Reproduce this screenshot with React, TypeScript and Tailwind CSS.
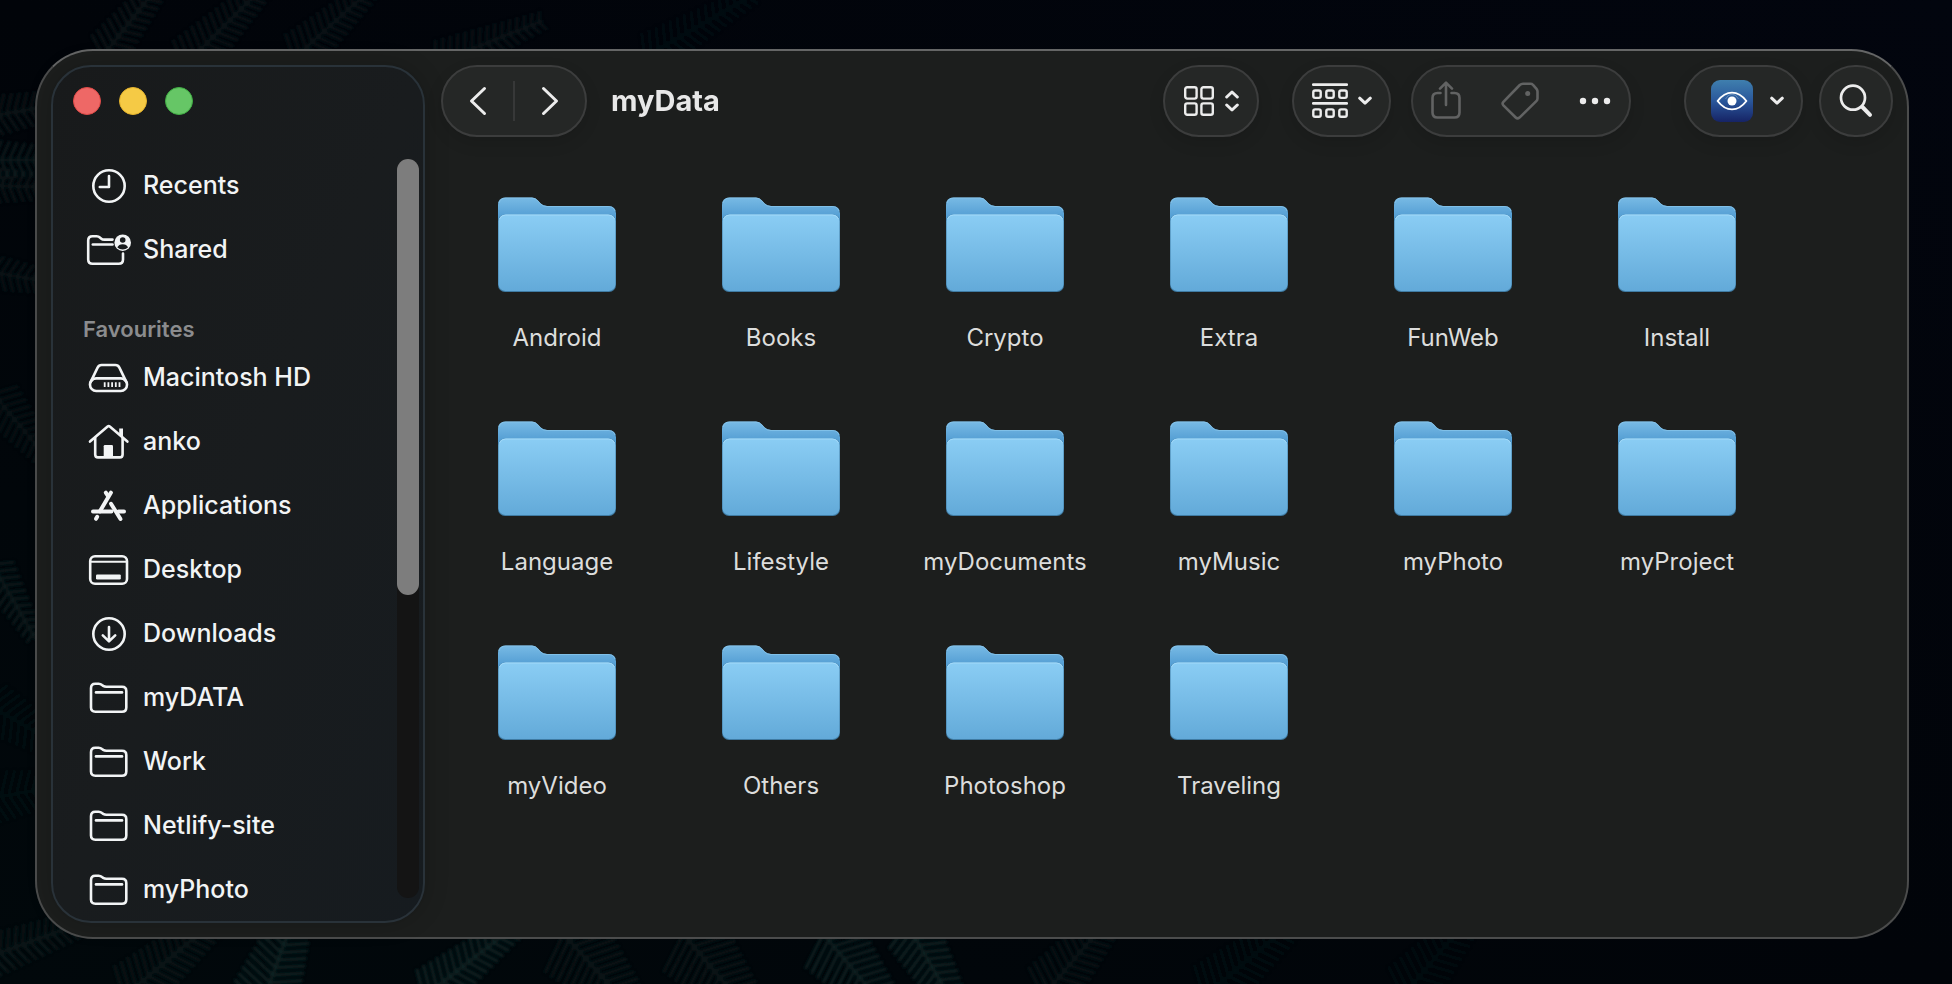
import type { ReactNode } from "react";

const ICON_FOLDER = (
  <>
    <path d="M7 10.3Q7 5.8 11.3 5.8H14.6Q16.6 5.8 18 7L19.2 7.9Q20.5 8.8 22.4 8.8H38Q42.3 8.8 42.3 13V29.5Q42.3 33.7 38 33.7H11.3Q7 33.7 7 29.5Z" />
    <path d="M12 14.4H38" />
  </>
);

const ICONS: Record<string, ReactNode> = {
  clock: (
    <>
      <circle cx="25" cy="20" r="15.7" />
      <path d="M25 10V21H15.8" />
    </>
  ),
  shared: (
    <>
      <path d="M28.5 9.6H20.4Q18.4 9.6 17 8.4L16.2 7.7Q14.6 6.2 12.6 6.2H8.5Q4.2 6.2 4.2 10.5V29.5Q4.2 33.8 8.5 33.8H34.7Q39 33.8 39 29.5V23.5" />
      <path d="M8.8 14.5H28.5" />
      <circle cx="38.7" cy="12.7" r="8.3" fill="currentColor" stroke="none" />
      <circle cx="38.7" cy="10" r="2.8" fill="#181b1d" stroke="none" />
      <path d="M33.4 17.6Q34.6 14.2 38.7 14.2T44 17.6Q41.8 19.6 38.7 19.6T33.4 17.6Z" fill="#181b1d" stroke="none" />
    </>
  ),
  disk: (
    <>
      <rect x="6" y="20.4" width="37" height="12.6" rx="6.2" />
      <path d="M6.8 23.6L13.6 9.6Q14.9 7 17.6 7H31.4Q34.1 7 35.4 9.6L42.2 23.6" />
      <path d="M20.7 24.2V29M24.4 24.2V29M28.1 24.2V29M31.8 24.2V29M35.5 24.2V29" strokeWidth="1.8" strokeLinecap="butt" />
    </>
  ),
  home: (
    <>
      <path d="M6 19.6L23.6 4.6Q24.7 3.7 25.8 4.6L43.4 19.6" />
      <path d="M11.2 16V32.5Q11.2 35.4 14 35.4H35.8Q38.6 35.4 38.6 32.5V16" />
      <path d="M19.7 36V24.2Q19.7 23 21 23H27.8Q29 23 29 24.2V36Z" fill="currentColor" stroke="none" />
      <path d="M35.2 6.4H39V15.6L35.2 12.4Z" fill="currentColor" stroke="none" />
    </>
  ),
  apps: (
    <g strokeWidth="4">
      <path d="M27 6.6L15.8 25.4" />
      <path d="M21.8 6.6L24 10" />
      <path d="M27 17.8L36.5 33" />
      <path d="M9 25.4H27.4M34.5 25.4H40" />
      <path d="M13.2 30.8L12 32.8" />
    </g>
  ),
  desktop: (
    <>
      <rect x="6.2" y="6.2" width="36.8" height="27.6" rx="4.8" />
      <path d="M7 11.8H42" strokeWidth="2" />
      <rect x="12" y="24.4" width="24.8" height="5" rx="1.2" fill="currentColor" stroke="none" />
    </>
  ),
  download: (
    <>
      <circle cx="25" cy="20" r="15.7" />
      <path d="M25 13V27M18.8 21.4L25 27.4L31.2 21.4" />
    </>
  ),
  folder: ICON_FOLDER,
};

const topLinks = [
  { icon: "clock", label: "Recents" },
  { icon: "shared", label: "Shared" },
];

const favourites = [
  { icon: "disk", label: "Macintosh HD" },
  { icon: "home", label: "anko" },
  { icon: "apps", label: "Applications" },
  { icon: "desktop", label: "Desktop" },
  { icon: "download", label: "Downloads" },
  { icon: "folder", label: "myDATA" },
  { icon: "folder", label: "Work" },
  { icon: "folder", label: "Netlify-site" },
  { icon: "folder", label: "myPhoto" },
];

const folders = [
  "Android", "Books", "Crypto", "Extra", "FunWeb", "Install",
  "Language", "Lifestyle", "myDocuments", "myMusic", "myPhoto", "myProject",
  "myVideo", "Others", "Photoshop", "Traveling",
];

// x, y, heading in degrees, stem length, leaflet length, opacity
const fronds = [
  [100, 60, -52, 110, 22, 0.5],
  [180, 70, -45, 120, 26, 0.45],
  [290, 62, -42, 110, 24, 0.4],
  [430, 66, -22, 120, 22, 0.4],
  [640, 60, -30, 130, 22, 0.25],
  [-30, 120, -10, 130, 22, 0.5],
  [-20, 160, 0, 110, 20, 0.55],
  [-20, 185, 2, 110, 18, 0.5],
  [-20, 270, 10, 110, 18, 0.4],
  [-10, 390, 50, 100, 24, 0.35],
  [-10, 560, 60, 90, 20, 0.55],
  [-20, 700, 30, 120, 26, 0.3],
  [-20, 800, -10, 120, 26, 0.3],
  [-20, 960, -20, 150, 22, 0.5],
  [120, 1000, -40, 140, 30, 0.5],
  [260, 1010, -70, 120, 34, 0.9],
  [420, 1000, -38, 130, 26, 0.9],
  [560, 930, 48, 120, 40, 0.5],
  [680, 930, 50, 120, 40, 0.5],
  [820, 930, 50, 120, 36, 0.7],
  [905, 920, 60, 120, 28, 0.9],
  [1040, 1000, -50, 130, 30, 0.4],
  [1200, 1000, -40, 130, 30, 0.3],
  [1400, 1000, -50, 120, 30, 0.2],
];

function Frond({ data }: { data: number[] }) {
  const [x, y, angle, length, leaf, opacity] = data;
  let d = `M0 0H${length}`;
  for (let i = 6; i < length; i += 8) {
    const size = leaf * (1 - (i / length) * 0.6);
    d += `M${i} 2L${i + size * 0.4} ${size}M${i} -2L${i + size * 0.4} ${-size}`;
  }
  return (
    <path
      d={d}
      transform={`translate(${x} ${y}) rotate(${angle})`}
      stroke="#112626"
      strokeWidth="3"
      strokeLinecap="round"
      fill="none"
      opacity={opacity}
    />
  );
}

function Wallpaper() {
  return (
    <svg
      className="absolute inset-0 h-full w-full"
      viewBox="0 0 1952 984"
      preserveAspectRatio="xMidYMid slice"
      aria-hidden="true"
    >
      <defs>
        <linearGradient id="night" x1="0" y1="1" x2="1" y2="0">
          <stop offset="0" stopColor="#01080b" />
          <stop offset="0.5" stopColor="#010409" />
          <stop offset="1" stopColor="#02050e" />
        </linearGradient>
        <filter id="soft">
          <feGaussianBlur stdDeviation="1.6" />
        </filter>
      </defs>
      <rect width="1952" height="984" fill="url(#night)" />
      <g filter="url(#soft)">
        {fronds.map((data, i) => (
          <Frond key={i} data={data} />
        ))}
      </g>
    </svg>
  );
}

function FolderArt() {
  return (
    <svg width="118" height="96" viewBox="0 0 118 96" aria-hidden="true">
      <path
        d="M0 8Q0 0.5 7.5 0.5H34Q37.5 0.5 40 3.5L42.5 6.3Q45 9 49 9H110.5Q118 9 118 16.5V60H0Z"
        fill="url(#folderBack)"
      />
      <path
        d="M1 6Q2.5 1 7.5 1H34Q37.5 1 40 4L42.5 6.8Q45 9.5 49 9.5H110.5Q115.5 9.5 117 14"
        fill="none"
        stroke="#8cc8ec"
        strokeOpacity="0.7"
      />
      <rect y="17.5" width="118" height="77.5" rx="7" fill="#3f7ba3" />
      <rect x="0.5" y="17.5" width="117" height="76.5" rx="7" fill="url(#folderFront)" />
      <path d="M1.5 22Q3 18 7.5 18H110.5Q115 18 116.5 22" fill="none" stroke="#a3dafa" />
    </svg>
  );
}

function Chevron() {
  return (
    <svg width="14" height="10" viewBox="0 0 14 10" fill="none" stroke="currentColor" strokeWidth="3" strokeLinecap="round" strokeLinejoin="round" aria-hidden="true">
      <path d="M1.7 2.2L7 7.2L12.3 2.2" />
    </svg>
  );
}

function Pill({ className, children }: { className: string; children: ReactNode }) {
  return (
    <div
      className={`flex h-[72px] shrink-0 rounded-full border-2 border-[#3c3d3d] bg-[#252726] shadow-[0_6px_16px_rgba(0,0,0,0.12)] ${className}`}
    >
      {children}
    </div>
  );
}

function SidebarItem({ icon, label }: { icon: string; label: string }) {
  return (
    <li>
      <a href="#" className="flex h-16 items-center gap-[11px] pl-[31px] text-[25px] font-medium text-[#f2f4f5]">
        <svg
          className="shrink-0"
          width="48"
          height="40"
          viewBox="0 0 48 40"
          fill="none"
          stroke="currentColor"
          strokeWidth="2.6"
          strokeLinecap="round"
          strokeLinejoin="round"
          aria-hidden="true"
        >
          {ICONS[icon]}
        </svg>
        {label}
      </a>
    </li>
  );
}

function Sidebar() {
  return (
    <aside className="flex w-[374px] shrink-0 flex-col overflow-hidden rounded-[40px] border-2 border-[#293239] bg-linear-to-br from-[#181a1b] via-[#191c1e] to-[#161b1f] shadow-[0_0_24px_rgba(0,0,0,0.2)]">
      <div className="flex gap-[18px] px-5 pt-5">
        <button aria-label="Close" className="size-7 rounded-full border border-[#e04b48] bg-[#ee6866]" />
        <button aria-label="Minimise" className="size-7 rounded-full border border-[#e5b32c] bg-[#f5ca45]" />
        <button aria-label="Zoom" className="size-7 rounded-full border border-[#40ae44] bg-[#66c666]" />
      </div>
      <div className="mt-[39px] flex min-h-0 flex-1">
        <nav className="min-w-0 flex-1 overflow-hidden">
          <ul>
            {topLinks.map((item) => (
              <SidebarItem key={item.label} {...item} />
            ))}
          </ul>
          <h2 className="flex h-16 items-end pb-1 pl-[30px] text-[22px] leading-[26px] font-semibold text-[#8b8c8e]">
            Favourites
          </h2>
          <ul>
            {favourites.map((item) => (
              <SidebarItem key={item.label} {...item} />
            ))}
          </ul>
        </nav>
        <div className="mt-[5px] mr-1 mb-[23px] w-[22px] rounded-full bg-[#141414]">
          <div className="h-[59%] rounded-full bg-[#7d7d7d]" />
        </div>
      </div>
    </aside>
  );
}

function Toolbar() {
  return (
    <header className="flex items-center pl-4 text-[#ececec]">
      <Pill className="w-[146px]">
        <button aria-label="Back" className="flex flex-1 items-center justify-center">
          <svg width="18" height="30" viewBox="0 0 18 30" fill="none" stroke="currentColor" strokeWidth="3" strokeLinecap="round" strokeLinejoin="round">
            <path d="M15.5 2.5L2.5 15L15.5 27.5" />
          </svg>
        </button>
        <span className="h-10 w-[2px] self-center bg-[#373838]" />
        <button aria-label="Forward" className="flex flex-1 items-center justify-center">
          <svg width="18" height="30" viewBox="0 0 18 30" fill="none" stroke="currentColor" strokeWidth="3" strokeLinecap="round" strokeLinejoin="round">
            <path d="M2.5 2.5L15.5 15L2.5 27.5" />
          </svg>
        </button>
      </Pill>
      <h1 className="ml-6 flex-1 text-[29px] font-bold text-[#e8e8e8]">myData</h1>

      <Pill className="w-24">
        <button aria-label="View as icons" className="flex flex-1 items-center justify-center gap-[11px]">
          <svg width="30" height="30" viewBox="0 0 30 30" fill="none" stroke="currentColor" strokeWidth="2.4">
            <rect x="1.2" y="1.2" width="11.4" height="11.4" rx="2" />
            <rect x="17.4" y="1.2" width="11.4" height="11.4" rx="2" />
            <rect x="1.2" y="17.4" width="11.4" height="11.4" rx="2" />
            <rect x="17.4" y="17.4" width="11.4" height="11.4" rx="2" />
          </svg>
          <svg width="14" height="22" viewBox="0 0 14 22" fill="none" stroke="currentColor" strokeWidth="3" strokeLinecap="round" strokeLinejoin="round">
            <path d="M1.7 7L7 2L12.3 7M1.7 15L7 20L12.3 15" />
          </svg>
        </button>
      </Pill>

      <Pill className="ml-[33px] w-[99px]">
        <button aria-label="Group items" className="flex flex-1 items-center justify-center gap-[10px]">
          <svg width="36" height="36" viewBox="0 0 36 36" fill="none" stroke="currentColor" strokeWidth="2.4">
            <path d="M1.2 1.6H34.8M1.2 20.4H34.8" strokeLinecap="round" strokeWidth="2.6" />
            <rect x="1.3" y="7.5" width="7.4" height="7.4" rx="1.8" />
            <rect x="14.3" y="7.5" width="7.4" height="7.4" rx="1.8" />
            <rect x="27.3" y="7.5" width="7.4" height="7.4" rx="1.8" />
            <rect x="1.3" y="26.4" width="7.4" height="7.4" rx="1.8" />
            <rect x="14.3" y="26.4" width="7.4" height="7.4" rx="1.8" />
            <rect x="27.3" y="26.4" width="7.4" height="7.4" rx="1.8" />
          </svg>
          <Chevron />
        </button>
      </Pill>

      <Pill className="ml-5 w-[220px] justify-between px-[18px]">
        <button aria-label="Share" disabled className="text-[#626363]">
          <svg width="30" height="40" viewBox="0 0 30 40" fill="none" stroke="currentColor" strokeWidth="2.6" strokeLinecap="round" strokeLinejoin="round">
            <path d="M9.5 12H6.5Q1.5 12 1.5 17V31.5Q1.5 36.5 6.5 36.5H23.5Q28.5 36.5 28.5 31.5V17Q28.5 12 23.5 12H20.5" />
            <path d="M15 24V2M9 7.6L15 1.6L21 7.6" />
          </svg>
        </button>
        <button aria-label="Tags" disabled className="text-[#626363]">
          <svg width="38" height="38" viewBox="0 0 38 38" fill="none" stroke="currentColor" strokeWidth="2.6" strokeLinejoin="round">
            <path d="M22 1.8H29.5Q31 1.8 32 2.8L35.5 6.8Q36.5 8 36.5 9.5V16.5Q36.5 18 35.3 19.2L18.5 35.6Q16.5 37.3 14.7 35.5L2.4 23.3Q0.8 21.5 2.4 19.8L18.8 3Q20.2 1.8 22 1.8Z" />
            <circle cx="26.7" cy="11.6" r="2.5" fill="currentColor" stroke="none" />
          </svg>
        </button>
        <button aria-label="More actions">
          <svg width="32" height="8" viewBox="0 0 32 8" fill="currentColor">
            <circle cx="4" cy="4" r="3.2" />
            <circle cx="16" cy="4" r="3.2" />
            <circle cx="28" cy="4" r="3.2" />
          </svg>
        </button>
      </Pill>

      <Pill className="ml-[53px] w-[119px]">
        <button aria-label="Preview actions" className="flex flex-1 items-center gap-[17px] pl-[25px]">
          <svg width="42" height="42" viewBox="0 0 42 42" fill="none">
            <rect width="42" height="42" rx="9" fill="url(#eyeTile)" />
            <path d="M6.6 21Q13 12.6 21 12.6T35.4 21Q29 29.4 21 29.4T6.6 21Z" stroke="#fff" strokeWidth="1.9" strokeLinejoin="round" />
            <circle cx="21" cy="21" r="4.5" fill="#fff" />
            <path d="M14.5 19Q17 14.2 21 14.2T27.5 19" stroke="#fff" strokeOpacity="0.25" />
          </svg>
          <Chevron />
        </button>
      </Pill>

      <Pill className="ml-4 w-[74px]">
        <button aria-label="Search" className="flex flex-1 items-center justify-center">
          <svg width="34" height="34" viewBox="0 0 34 34" fill="none" stroke="currentColor" strokeLinecap="round">
            <circle cx="14" cy="13.7" r="12" strokeWidth="2.7" />
            <path d="M23.4 23L31 30.8" strokeWidth="4" />
          </svg>
        </button>
      </Pill>
    </header>
  );
}

export default function App() {
  return (
    <div className="relative h-screen overflow-hidden bg-[#01040a] pt-[49px] pr-[43px] pb-[45px] pl-[35px] font-['Inter','Liberation_Sans',sans-serif]">
      <Wallpaper />
      <svg width="0" height="0" className="absolute" aria-hidden="true">
        <defs>
          <linearGradient id="folderBack" x1="0" y1="0" x2="0" y2="1">
            <stop offset="0" stopColor="#78bae5" />
            <stop offset="0.35" stopColor="#519cd2" />
          </linearGradient>
          <linearGradient id="folderFront" x1="0" y1="0" x2="0" y2="1">
            <stop offset="0" stopColor="#8acdf4" />
            <stop offset="1" stopColor="#63aad9" />
          </linearGradient>
          <linearGradient id="eyeTile" x1="0" y1="0" x2="0" y2="1">
            <stop offset="0" stopColor="#3f7fae" />
            <stop offset="0.5" stopColor="#2a579b" />
            <stop offset="1" stopColor="#162365" />
          </linearGradient>
        </defs>
      </svg>

      <div className="relative flex h-full rounded-[58px] border-2 border-[#4b4c4c] border-t-[#656666] bg-[#1c1e1d] p-[14px]">
        <Sidebar />
        <main className="min-w-0 flex-1">
          <Toolbar />
          <ul className="mt-[60px] ml-5 grid grid-cols-[repeat(auto-fill,224px)]">
            {folders.map((name) => (
              <li key={name} className="h-[224px]">
                <button className="flex w-full flex-col items-center">
                  <FolderArt />
                  <span className="mt-[30px] text-[24px] leading-[30px] font-normal text-[#dcdddc]">{name}</span>
                </button>
              </li>
            ))}
          </ul>
        </main>
      </div>
    </div>
  );
}
